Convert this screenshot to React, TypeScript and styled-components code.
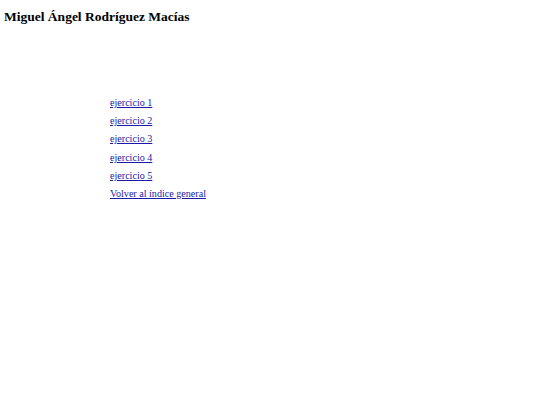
import React from "react";
import styled, { createGlobalStyle } from "styled-components";

const Global = createGlobalStyle`
  html, body { margin: 0; padding: 0; background: #fff; }
  body { font-family: "Liberation Serif", "Times New Roman", serif; color: #000; }
`;

const Page = styled.div`
  padding: 9px 4px;
`;

const Title = styled.h1`
  margin: 0;
  font-size: 13.5px;
  font-weight: bold;
  line-height: 16px;
`;

const LinkList = styled.nav`
  display: flex;
  flex-direction: column;
  align-items: flex-start;
  margin: 69px 0 0 106px;
`;

const Item = styled.a`
  font-size: 10.1px;
  line-height: 18.2px;
  color: #1a1aa6;
  text-decoration: underline;
`;

const links = ["ejercicio 1", "ejercicio 2", "ejercicio 3", "ejercicio 4", "ejercicio 5", "Volver al índice general"];

export default function App() {
  return (
    <>
      <Global />
      <Page>
        <Title>Miguel Ángel Rodríguez Macías</Title>
        <LinkList>
          {links.map((l) => (
            <Item key={l} href="#">{l}</Item>
          ))}
        </LinkList>
      </Page>
    </>
  );
}
